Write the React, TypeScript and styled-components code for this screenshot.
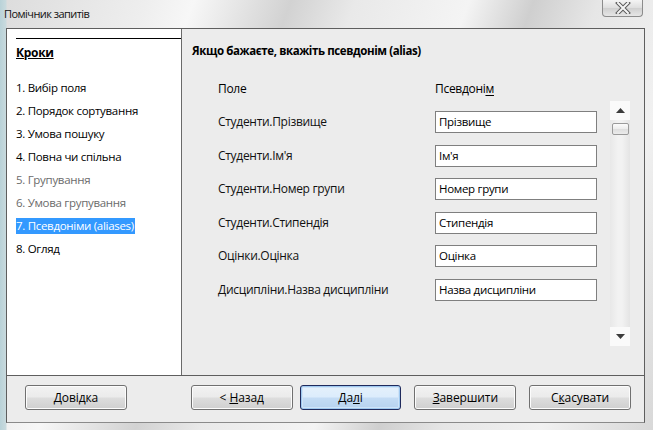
import React from "react";
import styled, { createGlobalStyle, css } from "styled-components";

const Global = createGlobalStyle`
  html, body { margin: 0; padding: 0; }
  body { width: 653px; height: 430px; overflow: hidden; font-family: "Open Sans", "Noto Sans", sans-serif; }
`;

const Desk = styled.div`
  width: 653px;
  height: 430px;
  display: flex;
  flex-direction: column;
  background:
    linear-gradient(90deg, #b9d2d8 0px, #c9dade 6px, transparent 7px),
    linear-gradient(110deg, #dcdcdc 0%, #eeeeee 18%, #f7f7f7 24%, #d2d2d2 36%, #e9e9e9 44%, #f4f4f4 58%, #cfcfcf 66%, #e6e6e6 74%, #f1f1f1 86%, #d8d8d8 100%);
`;

const TitleBar = styled.div`
  height: 28px;
  display: flex;
  align-items: flex-start;
  justify-content: space-between;
  padding: 0 8px 0 4px;
`;

const Title = styled.div`
  font-family: "Open Sans", sans-serif;
  font-size: 11px;
  color: #111;
  line-height: 28px;
  letter-spacing: -0.55px;
`;

const CloseBtn = styled.div`
  width: 39px;
  height: 16px;
  margin-right: 2px;
  border: 1px solid #8c8c8c;
  border-top: none;
  border-radius: 0 0 4px 4px;
  background: linear-gradient(#f4f4f4, #dedede 50%, #cfcfcf 51%, #e6e6e6);
  display: flex;
  align-items: center;
  justify-content: center;
`;

const Dialog = styled.div`
  margin: 0 8px 0 6px;
  height: 395px;
  display: flex;
  flex-direction: column;
  border: 1px solid #5e5e5e;
  border-bottom-color: #8a8a8a;
  background: #ececec;
  box-sizing: border-box;
`;

const Content = styled.div`
  height: 346px;
  display: flex;
  border-bottom: 1px solid #5e5e5e;
`;

const Sidebar = styled.div`
  width: 175px;
  background: #ffffff;
  border-right: 1px solid #6a6a6a;
  padding: 9px 0 0 9px;
  box-sizing: border-box;
  display: flex;
  flex-direction: column;
`;

const StepsHead = styled.div`
  border-top: 1px solid #000;
  padding-top: 6px;
  font-weight: 700;
  font-size: 12px;
  text-decoration: underline;
  line-height: 16px;
  letter-spacing: -0.3px;
  color: #000;
  margin-bottom: 19px;
`;

const Step = styled.div<{ $dim?: boolean; $active?: boolean }>`
  font-size: 11.5px;
  line-height: 16px;
  height: 23px;
  letter-spacing: -0.3px;
  color: ${(p) => (p.$dim ? "#6b6b6b" : "#000")};
  span {
    display: inline-block;
    padding-right: 1px;
    ${(p) =>
      p.$active &&
      css`
        background: #3399ff;
        color: #fff;
      `}
  }
`;

const Main = styled.div`
  flex: 1;
  padding: 14px 0 0 10px;
  display: flex;
  flex-direction: column;
`;

const Heading = styled.div`
  font-weight: 700;
  font-size: 11.5px;
  line-height: 16px;
  letter-spacing: -0.4px;
  color: #000;
`;

const Body = styled.div`
  display: flex;
  align-items: flex-start;
  padding-left: 26px;
  margin-top: 22px;
`;

const Fields = styled.div`
  display: grid;
  grid-template-columns: 217px 162px;
  row-gap: 11.6px;
  align-items: center;
`;

const HeadCell = styled.div`
  font-size: 12px;
  line-height: 16px;
  color: #000;
  letter-spacing: -0.3px;
  margin-bottom: 2.4px;
  u { text-underline-offset: 2px; }
`;

const Label = styled.div`
  font-size: 12px;
  line-height: 16px;
  color: #111;
  letter-spacing: -0.3px;
`;

const Input = styled.div`
  height: 22px;
  box-sizing: border-box;
  border: 1px solid #7f7f7f;
  background: #fff;
  font-size: 11.5px;
  letter-spacing: -0.3px;
  line-height: 20px;
  padding-left: 3px;
  color: #000;
`;

const Scroll = styled.div`
  width: 20px;
  height: 245px;
  margin-left: 13px;
  margin-top: 20px;
  display: flex;
  flex-direction: column;
  background: linear-gradient(90deg, #e8e8e8, #f2f2f2 40%, #f2f2f2 60%, #e4e4e4);
`;

const Arrow = styled.div`
  height: 19px;
  background: #fafafa;
  display: flex;
  align-items: center;
  justify-content: center;
`;

const Track = styled.div`
  flex: 1;
  padding-top: 3px;
  display: flex;
  justify-content: center;
`;

const Thumb = styled.div`
  width: 17px;
  height: 12px;
  box-sizing: border-box;
  border: 1px solid #9a9a9a;
  border-radius: 2px;
  background: linear-gradient(#fbfbfb, #ececec 50%, #dedede 51%, #ebebeb);
`;

const ButtonBar = styled.div`
  flex: 1;
  display: flex;
  align-items: center;
  padding: 0 13px 3px 18px;
`;

const Button = styled.div<{ $default?: boolean; $gap?: number }>`
  width: 102px;
  height: 25px;
  box-sizing: border-box;
  margin-left: ${(p) => p.$gap ?? 0}px;
  border: 1px solid #707070;
  border-radius: 3px;
  background: linear-gradient(#f2f2f2, #ebebeb 48%, #dddddd 52%, #cfcfcf);
  box-shadow: inset 0 0 0 1px #fcfcfc;
  font-size: 12px;
  color: #000;
  display: flex;
  align-items: center;
  justify-content: center;
  letter-spacing: -0.1px;
  ${(p) =>
    p.$default &&
    css`
      border-color: #1f2a5c;
      background: linear-gradient(#e5f1fb, #dcecfc 48%, #c4dcf5 52%, #b6d2ef);
      box-shadow: inset 0 0 0 1px #9fc8ef, inset 0 0 0 2px #cfe3f7;
    `}
`;

const steps = [
  { t: "1. Вибір поля" },
  { t: "2. Порядок сортування" },
  { t: "3. Умова пошуку" },
  { t: "4. Повна чи спільна" },
  { t: "5. Групування", dim: true },
  { t: "6. Умова групування", dim: true },
  { t: "7. Псевдоніми (aliases)", active: true },
  { t: "8. Огляд" },
];

const rows = [
  ["Студенти.Прізвище", "Прізвище"],
  ["Студенти.Ім'я", "Ім'я"],
  ["Студенти.Номер групи", "Номер групи"],
  ["Студенти.Стипендія", "Стипендія"],
  ["Оцінки.Оцінка", "Оцінка"],
  ["Дисципліни.Назва дисципліни", "Назва дисципліни"],
];

export default function App() {
  return (
    <Desk>
      <Global />
      <TitleBar>
        <Title>Помічник запитів</Title>
        <CloseBtn>
          <svg width="16" height="12" viewBox="0 0 16 12">
            <path d="M3 1 L13 11 M13 1 L3 11" stroke="#5a5a5a" strokeWidth="4" strokeLinecap="square" />
            <path d="M3 1 L13 11 M13 1 L3 11" stroke="#f4f4f4" strokeWidth="2" strokeLinecap="square" />
          </svg>
        </CloseBtn>
      </TitleBar>
      <Dialog>
        <Content>
          <Sidebar>
            <StepsHead>Кроки</StepsHead>
            {steps.map((s) => (
              <Step key={s.t} $dim={s.dim} $active={s.active}>
                <span>{s.t}</span>
              </Step>
            ))}
          </Sidebar>
          <Main>
            <Heading>Якщо бажаєте, вкажіть псевдонім (alias)</Heading>
            <Body>
              <Fields>
                <HeadCell>Поле</HeadCell>
                <HeadCell>
                  Псевдоні<u>м</u>
                </HeadCell>
                {rows.map(([l, v]) => (
                  <React.Fragment key={l}>
                    <Label>{l}</Label>
                    <Input>{v}</Input>
                  </React.Fragment>
                ))}
              </Fields>
              <Scroll>
                <Arrow>
                  <svg width="9" height="5" viewBox="0 0 9 5">
                    <path d="M4.5 0 L9 5 L0 5 Z" fill="#3c3c3c" />
                  </svg>
                </Arrow>
                <Track>
                  <Thumb />
                </Track>
                <Arrow>
                  <svg width="9" height="5" viewBox="0 0 9 5">
                    <path d="M0 0 L9 0 L4.5 5 Z" fill="#3c3c3c" />
                  </svg>
                </Arrow>
              </Scroll>
            </Body>
          </Main>
        </Content>
        <ButtonBar>
          <Button>
            <span><u>Д</u>овідка</span>
          </Button>
          <Button $gap={64}>
            <span>&lt; <u>Н</u>азад</span>
          </Button>
          <Button $default $gap={7}>
            <span>Да<u>л</u>і</span>
          </Button>
          <Button $gap={13}>
            <span><u>З</u>авершити</span>
          </Button>
          <Button $gap={13}>
            <span>С<u>к</u>асувати</span>
          </Button>
        </ButtonBar>
      </Dialog>
    </Desk>
  );
}
